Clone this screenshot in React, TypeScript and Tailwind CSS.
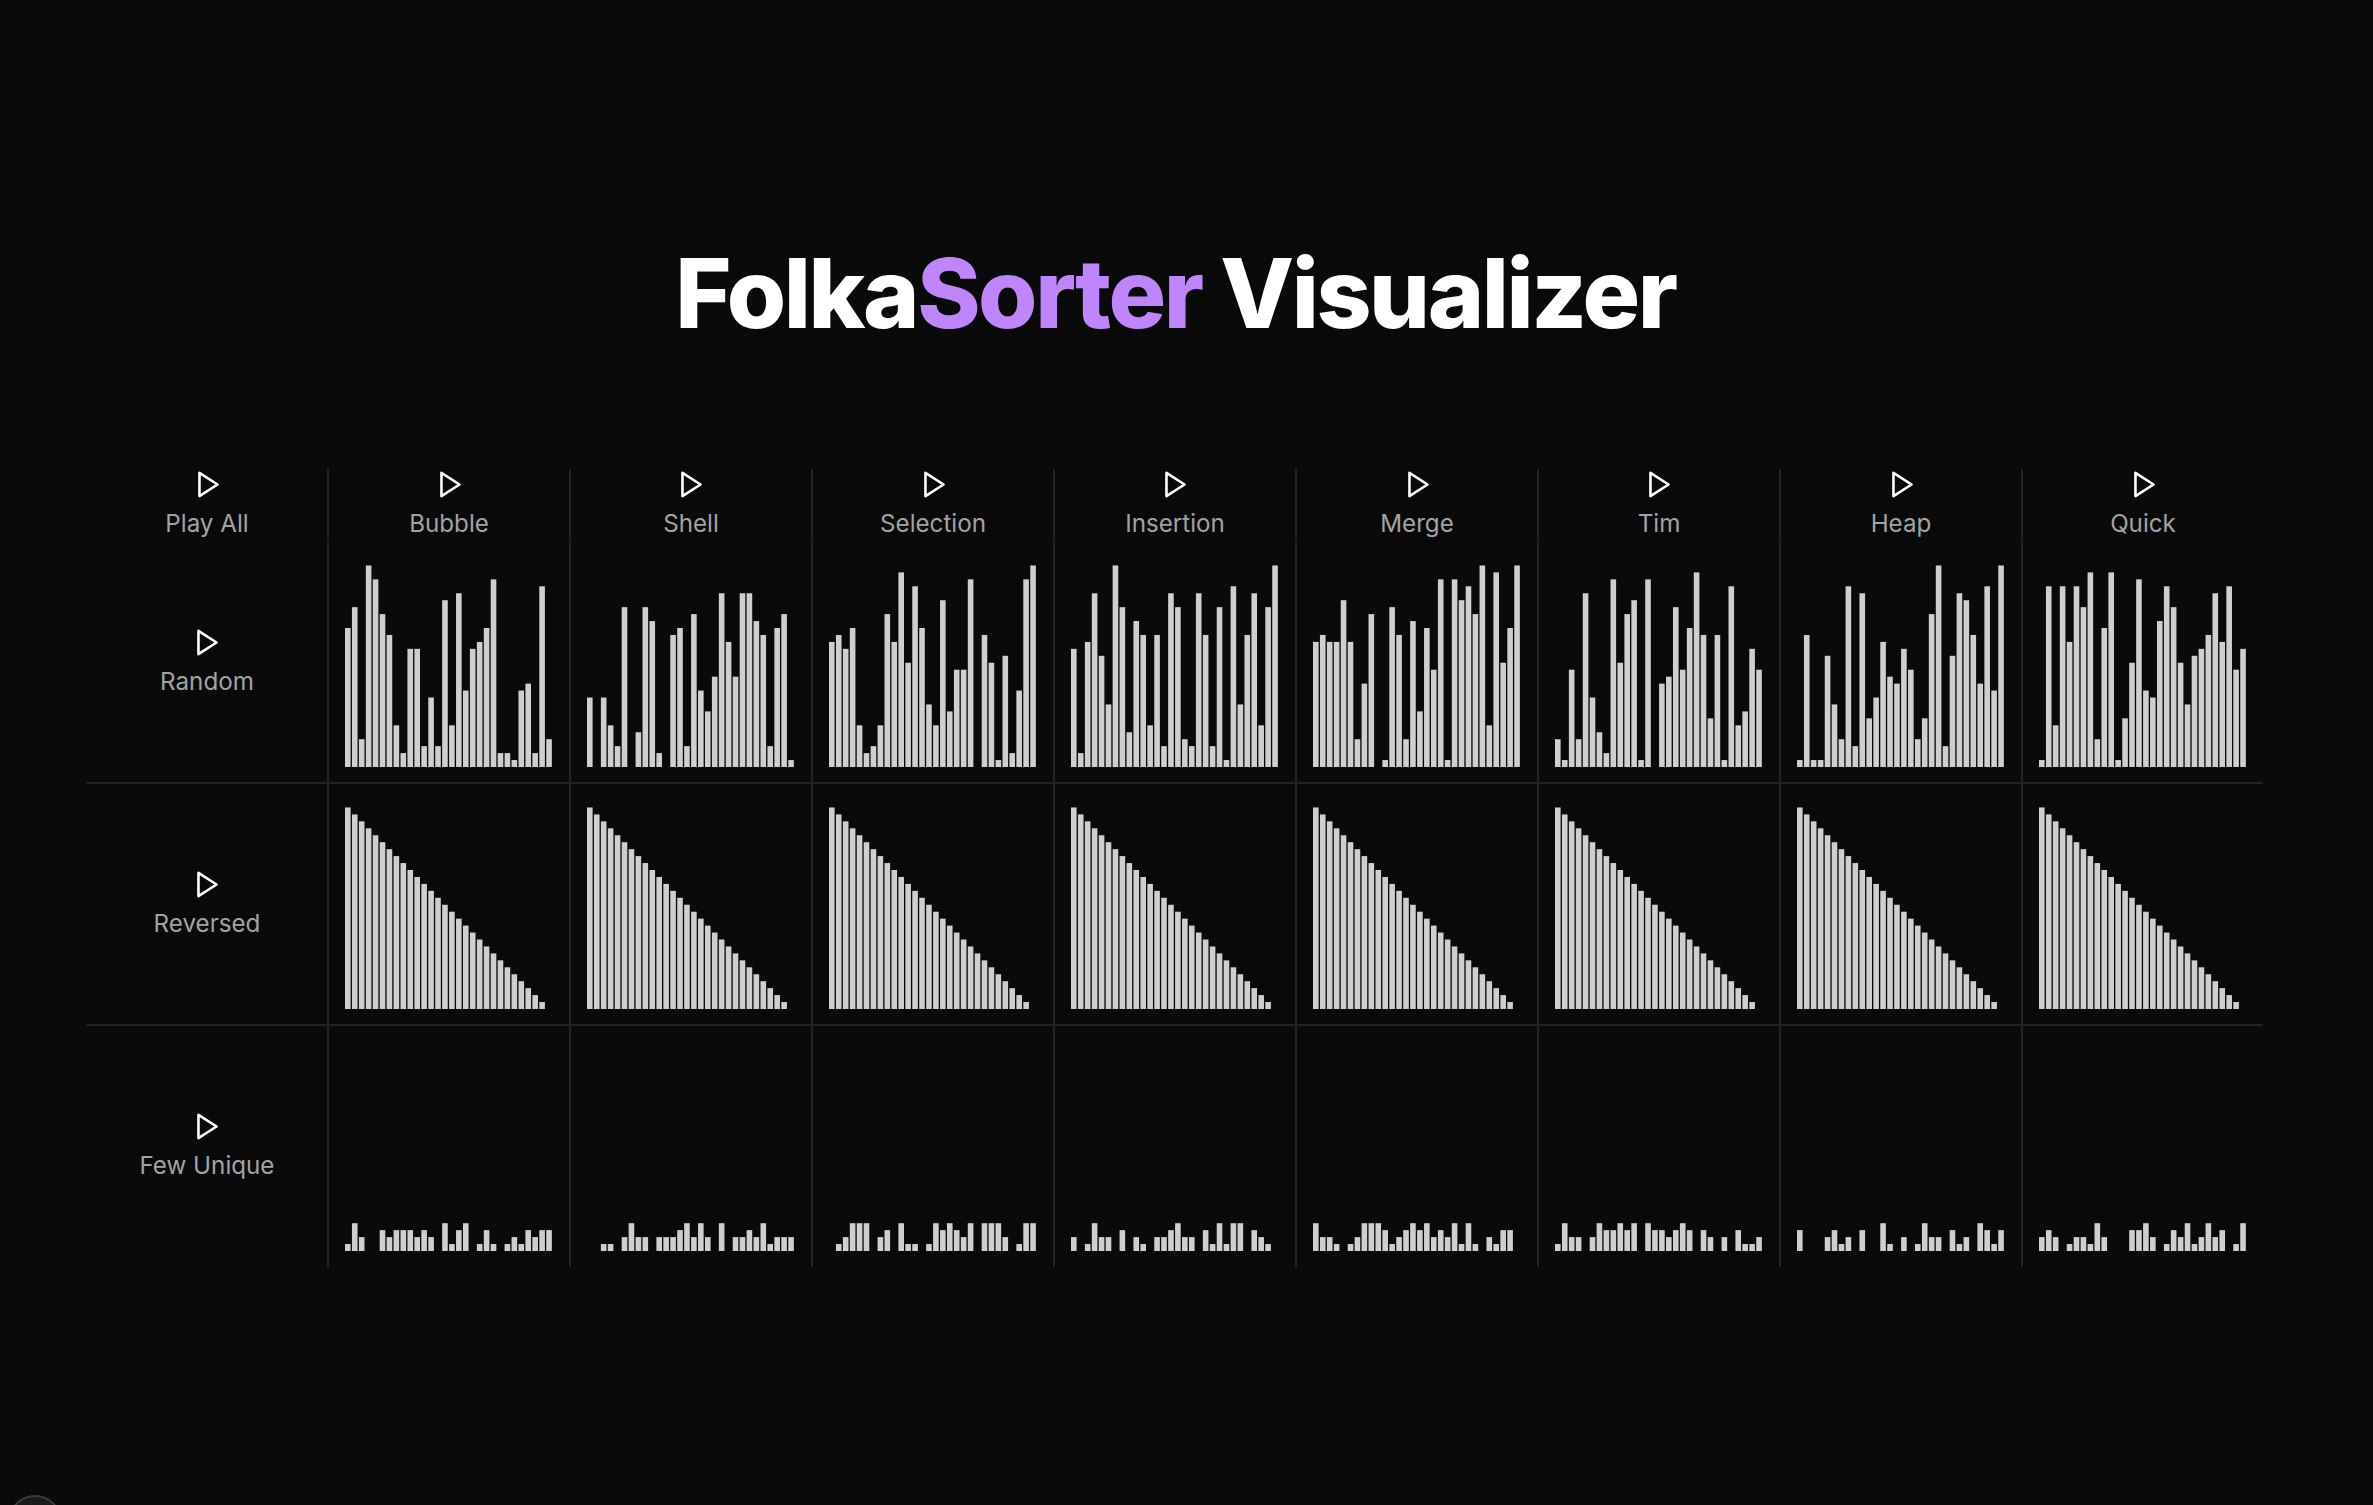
const ALGOS = ["Bubble", "Shell", "Selection", "Insertion", "Merge", "Tim", "Heap", "Quick"];

const RANDOM = [
  [20, 23, 4, 29, 27, 22, 19, 6, 2, 17, 17, 3, 10, 3, 24, 6, 25, 11, 17, 18, 20, 27, 2, 2, 1, 11, 12, 2, 26, 4],
  [10, 0, 10, 6, 3, 23, 0, 5, 23, 21, 2, 0, 19, 20, 3, 22, 11, 8, 13, 25, 18, 13, 25, 25, 21, 19, 3, 20, 22, 1],
  [18, 19, 17, 20, 6, 2, 3, 6, 22, 18, 28, 15, 26, 20, 9, 6, 24, 8, 14, 14, 27, 0, 19, 15, 1, 16, 2, 11, 27, 29],
  [17, 2, 18, 25, 16, 9, 29, 23, 5, 21, 19, 6, 19, 3, 25, 23, 4, 3, 25, 19, 3, 23, 1, 26, 9, 19, 25, 6, 23, 29],
  [18, 19, 18, 18, 24, 18, 4, 12, 22, 0, 1, 23, 19, 4, 21, 8, 20, 14, 27, 1, 27, 24, 26, 22, 29, 6, 28, 15, 20, 29],
  [4, 1, 14, 4, 25, 10, 5, 2, 27, 15, 22, 24, 1, 27, 0, 12, 13, 23, 14, 20, 28, 19, 7, 19, 1, 26, 6, 8, 17, 14],
  [1, 19, 1, 1, 16, 9, 4, 26, 3, 25, 7, 10, 18, 13, 12, 17, 14, 4, 7, 22, 29, 3, 16, 25, 24, 19, 12, 26, 11, 29],
  [1, 26, 6, 26, 18, 26, 23, 28, 4, 20, 28, 1, 7, 15, 27, 11, 10, 21, 26, 23, 15, 9, 16, 17, 19, 25, 18, 26, 14, 17],
];

const REVERSED = Array.from({ length: 30 }, (_, i) => 29 - i);

const FEW_UNIQUE = [
  [1, 4, 2, 0, 0, 3, 2, 3, 3, 3, 2, 3, 2, 0, 4, 1, 3, 4, 0, 1, 3, 1, 0, 1, 2, 1, 3, 2, 3, 3],
  [0, 0, 1, 1, 0, 2, 4, 2, 2, 0, 2, 2, 2, 3, 4, 2, 4, 2, 0, 4, 0, 2, 2, 3, 2, 4, 1, 2, 2, 2],
  [0, 1, 2, 4, 4, 4, 0, 2, 3, 0, 4, 1, 1, 0, 1, 4, 3, 4, 3, 2, 4, 0, 4, 4, 4, 2, 0, 1, 4, 4],
  [2, 0, 1, 4, 2, 2, 0, 3, 0, 2, 1, 0, 2, 2, 3, 4, 2, 2, 0, 3, 1, 4, 1, 4, 4, 0, 3, 2, 1, 0],
  [4, 2, 2, 1, 0, 1, 2, 4, 4, 4, 3, 1, 2, 3, 4, 3, 4, 2, 3, 2, 4, 1, 4, 1, 0, 2, 1, 3, 3, 0],
  [1, 4, 2, 2, 0, 2, 4, 3, 3, 4, 3, 4, 0, 4, 3, 3, 2, 3, 4, 3, 0, 3, 2, 0, 2, 0, 3, 1, 1, 2],
  [3, 0, 0, 0, 2, 3, 1, 2, 0, 3, 0, 0, 4, 1, 0, 2, 0, 1, 4, 2, 2, 0, 3, 1, 2, 0, 4, 3, 1, 3],
  [2, 3, 2, 0, 1, 2, 2, 1, 4, 2, 0, 0, 0, 3, 3, 4, 2, 0, 1, 3, 2, 4, 1, 2, 4, 2, 3, 0, 1, 4],
];

const ROWS = [
  { name: "Random", data: RANDOM },
  { name: "Reversed", data: ALGOS.map(() => REVERSED) },
  { name: "Few Unique", data: FEW_UNIQUE },
];

const STEP = 6.94;

function PlayIcon() {
  return (
    <svg viewBox="0 0 24 24" className="w-[31px] h-[31px] ml-[2px] fill-none stroke-white stroke-2">
      <polygon points="5 3 19 12 5 21 5 3" strokeLinejoin="round" />
    </svg>
  );
}

function Bars({ values }: { values: number[] }) {
  return (
    <svg viewBox="0 0 208.2 202" className="w-[208.2px] h-[202px]">
      {values.map((v, i) =>
        v > 0 ? (
          <rect key={i} x={i * STEP} y={202 - v * 6.95} width={5.6} height={v * 6.95} fill="#cfcfcf" />
        ) : null
      )}
    </svg>
  );
}

function Label({ name }: { name: string }) {
  return (
    <button className="flex flex-col items-center gap-[6px] text-[24.2px] leading-[36px] text-[#a3a3a3]">
      <PlayIcon />
      <span>{name}</span>
    </button>
  );
}

export default function App() {
  return (
    <div className="relative h-[1505px] overflow-hidden bg-[#0a0a0a] font-['Inter',sans-serif]">
      <div className="w-[2350px] flex flex-col items-center pt-[240px]">
        <h1 className="ml-[1px] text-[96px] leading-[106px] font-extrabold tracking-[-2.4px] text-white">
          Folka<span className="text-[#c084fc]">Sorter</span> Visualizer
        </h1>

        <div className="mt-[123px] w-[2176px]">
          <div className="grid grid-cols-[repeat(8,242px)_240px] h-[72px] mb-[2px]">
            {["Play All", ...ALGOS].map((name, i) => (
              <div
                key={name}
                className={`flex justify-center ${i < 8 ? "border-r-2 border-[#232323]" : ""}`}
              >
                <Label name={name} />
              </div>
            ))}
          </div>

          {ROWS.map((row, r) => (
            <div
              key={row.name}
              className={`grid grid-cols-[repeat(8,242px)_240px] ${r === 1 ? "h-[242px]" : "h-[241px]"} ${
                r < 2 ? "border-b-2 border-[#232323]" : ""
              }`}
            >
              <div className="flex items-center justify-center pt-[2px] border-r-2 border-[#232323]">
                <Label name={row.name} />
              </div>
              {row.data.map((values, i) => (
                <div
                  key={i}
                  className={`flex items-end pl-[16px] ${r === 2 ? "pb-[16px]" : "pb-[15px]"} ${
                    i < 7 ? "border-r-2 border-[#232323]" : ""
                  }`}
                >
                  <Bars values={values} />
                </div>
              ))}
            </div>
          ))}
        </div>
      </div>

      <div className="absolute left-[8px] top-[1495px] w-[54px] h-[54px] rounded-full border-2 border-[#3d3d3d] bg-[#1a1a1a]" />
    </div>
  );
}
